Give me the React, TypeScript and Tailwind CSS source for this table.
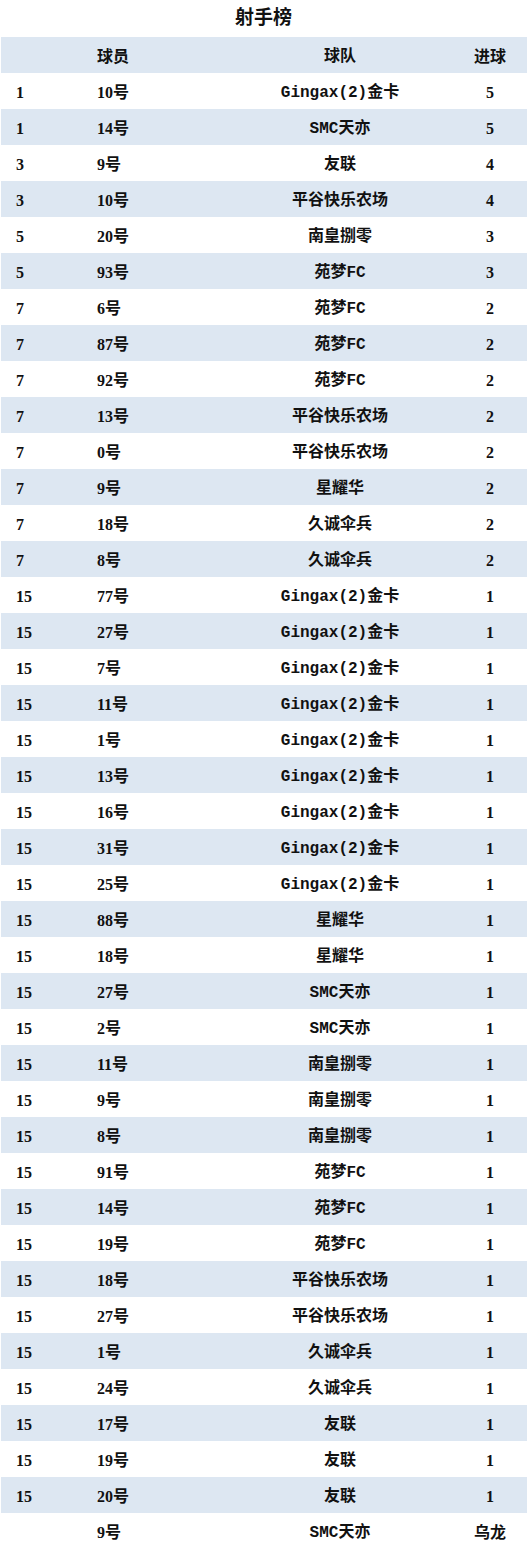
import React from "react";

const rows: [string, string, string, string][] = [
  ["1", "10号", "Gingax(2)金卡", "5"],
  ["1", "14号", "SMC天亦", "5"],
  ["3", "9号", "友联", "4"],
  ["3", "10号", "平谷快乐农场", "4"],
  ["5", "20号", "南皇捌零", "3"],
  ["5", "93号", "苑梦FC", "3"],
  ["7", "6号", "苑梦FC", "2"],
  ["7", "87号", "苑梦FC", "2"],
  ["7", "92号", "苑梦FC", "2"],
  ["7", "13号", "平谷快乐农场", "2"],
  ["7", "0号", "平谷快乐农场", "2"],
  ["7", "9号", "星耀华", "2"],
  ["7", "18号", "久诚伞兵", "2"],
  ["7", "8号", "久诚伞兵", "2"],
  ["15", "77号", "Gingax(2)金卡", "1"],
  ["15", "27号", "Gingax(2)金卡", "1"],
  ["15", "7号", "Gingax(2)金卡", "1"],
  ["15", "11号", "Gingax(2)金卡", "1"],
  ["15", "1号", "Gingax(2)金卡", "1"],
  ["15", "13号", "Gingax(2)金卡", "1"],
  ["15", "16号", "Gingax(2)金卡", "1"],
  ["15", "31号", "Gingax(2)金卡", "1"],
  ["15", "25号", "Gingax(2)金卡", "1"],
  ["15", "88号", "星耀华", "1"],
  ["15", "18号", "星耀华", "1"],
  ["15", "27号", "SMC天亦", "1"],
  ["15", "2号", "SMC天亦", "1"],
  ["15", "11号", "南皇捌零", "1"],
  ["15", "9号", "南皇捌零", "1"],
  ["15", "8号", "南皇捌零", "1"],
  ["15", "91号", "苑梦FC", "1"],
  ["15", "14号", "苑梦FC", "1"],
  ["15", "19号", "苑梦FC", "1"],
  ["15", "18号", "平谷快乐农场", "1"],
  ["15", "27号", "平谷快乐农场", "1"],
  ["15", "1号", "久诚伞兵", "1"],
  ["15", "24号", "久诚伞兵", "1"],
  ["15", "17号", "友联", "1"],
  ["15", "19号", "友联", "1"],
  ["15", "20号", "友联", "1"],
  ["", "9号", "SMC天亦", "乌龙"],
];

function Row({ cells, blue }: { cells: [string, string, string, string]; blue: boolean }) {
  return (
    <div
      className={
        blue
          ? "grid h-[36px] grid-cols-[96px_124px_238px_62px_1fr] items-center bg-[#dde7f2] pt-[3px]"
          : "grid h-[36px] grid-cols-[96px_124px_238px_62px_1fr] items-center bg-white pt-[3px]"
      }
    >
      <div className="pl-[15px] font-['Liberation_Serif','Noto_Sans_CJK_SC',serif]">{cells[0]}</div>
      <div className="font-['Liberation_Serif','Noto_Sans_CJK_SC',serif]">{cells[1]}</div>
      <div className="text-center">{cells[2]}</div>
      <div className="text-center font-['Liberation_Serif','Noto_Sans_CJK_SC',serif]">{cells[3]}</div>
      <div />
    </div>
  );
}

export default function App() {
  return (
    <div className="w-[527px] bg-white font-['Liberation_Mono','Noto_Sans_CJK_SC',monospace] text-[16px] font-bold text-[#111]">
      <div className="flex h-[37px] items-center justify-center pt-[2px] text-[19px]">射手榜</div>
      <div className="pl-[1px]">
        <Row cells={["", "球员", "球队", "进球"]} blue />
        {rows.map((r, i) => (
          <Row key={i} cells={r} blue={i % 2 === 1} />
        ))}
      </div>
    </div>
  );
}
